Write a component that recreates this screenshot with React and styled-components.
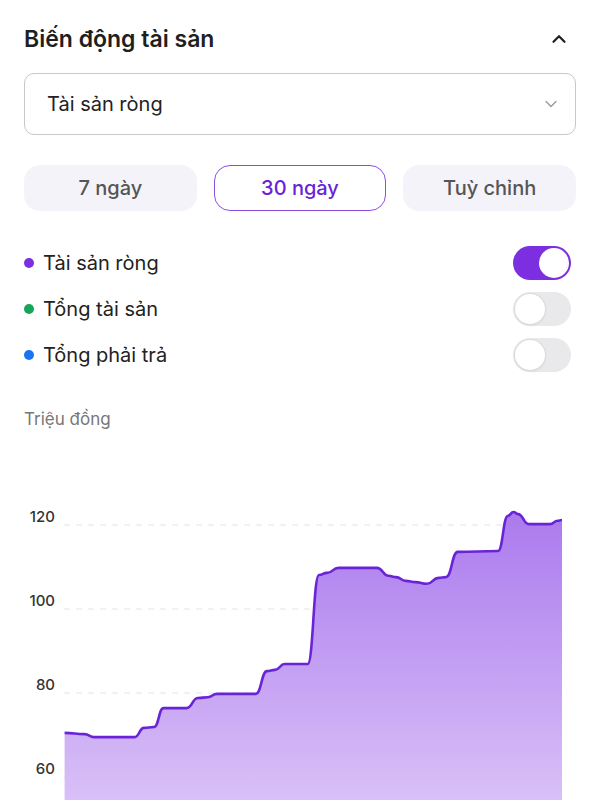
import React from 'react';
import styled, {createGlobalStyle} from 'styled-components';
import {ChevronUp, ChevronDown} from 'lucide-react';

const GlobalStyle = createGlobalStyle`
body{
	margin: 0;
	background: #fff;
	font-family: Inter, "Noto Sans", sans-serif;
	color: #1f1f1f;
}
`;

// [x on screen, value in million dong]
const points = [
	[64.6, 70.5], [84.6, 70.2], [94, 69.5], [134.6, 69.5], [144, 71.7], [154, 71.9],
	[163.5, 76.4], [186.5, 76.4], [198, 78.8], [207.7, 79.0], [217, 79.8], [255.8, 79.8],
	[267, 85.2], [275, 85.5], [284.6, 86.9], [307.7, 86.9], [319, 108.1], [327, 108.6],
	[338.5, 109.8], [377, 109.8], [388.5, 107.9], [396, 107.6], [405.8, 106.7], [415.4, 106.4],
	[427, 106.0], [438.5, 107.4], [446, 107.6], [457.7, 113.6], [498, 113.8], [508, 122.2],
	[513.5, 123.1], [518, 122.6], [528.8, 120.2], [550, 120.2], [557.7, 121.0], [562, 121.2],
];

const CHART_H = 360;
const toX = x => x - 24;
const toY = v => 85 + (120 - v) * 4.2;

function linePath(){
	let d = '';
	points.forEach(([x, v], i) => {
		const px = toX(x), py = toY(v);
		if(i === 0){ d += `M${px},${py}`; return; }
		const [x0, v0] = points[i - 1];
		const ox = toX(x0), oy = toY(v0);
		const mx = (ox + px) / 2;
		d += ` C${mx},${oy} ${mx},${py} ${px},${py}`;
	});
	return d;
}

const series = [
	{label: 'Tài sản ròng', color: '#7b2fe0', on: true},
	{label: 'Tổng tài sản', color: '#17a55a', on: false},
	{label: 'Tổng phải trả', color: '#1a73f0', on: false},
];

const ranges = ['7 ngày', '30 ngày', 'Tuỳ chỉnh'];

export default class App extends React.Component {
	render(){
		const line = linePath();
		const first = toX(points[0][0]);
		const last = toX(points[points.length - 1][0]);
		const area = `${line} L${last},${CHART_H} L${first},${CHART_H} Z`;
		return (
		<Page>
			<GlobalStyle/>
			<Header>
				<Title>Biến động tài sản</Title>
				<ChevronUp size={22} strokeWidth={2.4} color='#1f1f1f'/>
			</Header>
			<Select>
				<span>Tài sản ròng</span>
				<ChevronDown size={20} strokeWidth={1.6} color='#9a9a9a'/>
			</Select>
			<Tabs>
				{ranges.map(r => <Tab key={r} active={r === '30 ngày'}>{r}</Tab>)}
			</Tabs>
			<Legend>
				{series.map(s => (
					<LegendRow key={s.label}>
						<LegendName>
							<Dot color={s.color}/>
							{s.label}
						</LegendName>
						<Switch on={s.on}><Knob on={s.on}/></Switch>
					</LegendRow>
				))}
			</Legend>
			<Unit>Triệu đồng</Unit>
			<Chart width='552' height={CHART_H} viewBox={`0 0 552 ${CHART_H}`}>
				<defs>
					<linearGradient id='fill' x1='0' y1='0' x2='0' y2='1'>
						<stop offset='0' stopColor='#ab7aee'/>
						<stop offset='1' stopColor='#d9c0f7'/>
					</linearGradient>
				</defs>
				{[120, 100, 80, 60].map(v => (
					<g key={v}>
						<line x1='40' x2='540' y1={toY(v)} y2={toY(v)} stroke='#e4e4e4' strokeWidth='1' strokeDasharray='6 6'/>
						<text x='31' y={toY(v) - 7} textAnchor='end' dominantBaseline='middle' fontSize='15' fontWeight='500' fill='#333'>{v}</text>
					</g>
				))}
				<path d={area} fill='url(#fill)'/>
				<path d={line} fill='none' stroke='#6a24d8' strokeWidth='2.6' strokeLinejoin='round'/>
			</Chart>
		</Page>
		);
	}
}

const Page = styled.div`
padding: 24px 24px 0;
overflow: hidden;
height: 776px;
`;

const Header = styled.div`
display: flex;
align-items: center;
justify-content: space-between;
height: 30px;
padding-right: 6px;
`;

const Title = styled.h2`
margin: 0;
font-size: 23px;
font-weight: 600;
line-height: 30px;
color: #1f1f1f;
`;

const Select = styled.div`
margin-top: 19px;
height: 62px;
box-sizing: border-box;
border: 1.5px solid #c9c9c9;
border-radius: 10px;
display: flex;
align-items: center;
justify-content: space-between;
padding: 0 14px 0 22px;
font-size: 20px;
color: #222;
`;

const Tabs = styled.div`
margin-top: 30px;
display: grid;
grid-template-columns: repeat(3, 1fr);
gap: 17px;
`;

const Tab = styled.div`
height: 46px;
box-sizing: border-box;
border-radius: 16px;
display: flex;
align-items: center;
justify-content: center;
font-size: 20px;
font-weight: 500;
background: ${p => p.active ? '#fff' : '#f4f3f9'};
border: 1.5px solid ${p => p.active ? '#8b4fe3' : 'transparent'};
color: ${p => p.active ? '#6a24d8' : '#555'};
`;

const Legend = styled.div`
margin-top: 29px;
`;

const LegendRow = styled.div`
height: 46px;
display: flex;
align-items: center;
justify-content: space-between;
padding-right: 5px;
`;

const LegendName = styled.div`
display: flex;
align-items: center;
gap: 9px;
font-size: 20px;
color: #222;
`;

const Dot = styled.span`
width: 10px;
height: 10px;
border-radius: 50%;
background: ${p => p.color};
`;

const Switch = styled.div`
width: 58px;
height: 34px;
box-sizing: border-box;
border-radius: 17px;
padding: 2px;
display: flex;
justify-content: ${p => p.on ? 'flex-end' : 'flex-start'};
background: ${p => p.on ? '#7b2fe0' : '#e9e9eb'};
`;

const Knob = styled.span`
width: 30px;
height: 30px;
border-radius: 50%;
background: #fff;
box-shadow: ${p => p.on ? 'none' : '0 0 0 1px #dcdcdc, 0 1px 3px rgba(0,0,0,0.12)'};
`;

const Unit = styled.div`
margin-top: 31px;
font-size: 17px;
line-height: 20px;
color: #777;
`;

const Chart = styled.svg`
display: block;
margin-top: 11px;
font-family: Inter, sans-serif;
`;
